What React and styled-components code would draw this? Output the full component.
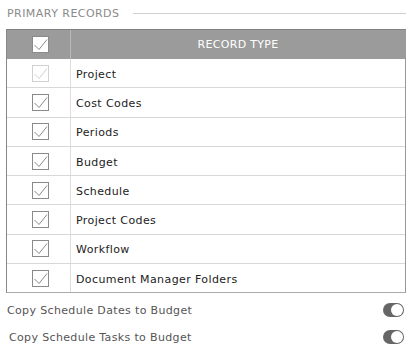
import React from "react";
import styled, { createGlobalStyle } from "styled-components";

const Global = createGlobalStyle`
  html, body { margin: 0; padding: 0; background: #fff; }
  body { font-family: "DejaVu Sans", Verdana, sans-serif; }
`;

const Page = styled.div`
  width: 413px;
  padding: 0 7px 0 6px;
  box-sizing: border-box;
`;

const SectionHead = styled.div`
  display: flex;
  align-items: center;
  height: 27px;
  padding-left: 1px;
  gap: 14px;
`;

const SectionTitle = styled.span`
  font-size: 11px;
  color: #8a8a8a;
  letter-spacing: 0.45px;
  white-space: nowrap;
`;

const Rule = styled.div`
  flex: 1;
  height: 1px;
  background: #d0d0d0;
`;

const Table = styled.div`
  margin-top: 2px;
  border: 1px solid #aaa;
  border-top-color: #808080;
  border-left-color: #888;
  border-right-color: #999;
`;

const Row = styled.div`
  display: grid;
  grid-template-columns: 64px 1fr;
  height: ${(p) => (p.$head ? "29px" : "28.3px")};
  background: ${(p) => (p.$head ? "#9b9b9b" : "#fff")};
  border-top: ${(p) => (p.$head || p.$afterHead ? "none" : "1px solid #d8d8d8")};
  box-sizing: content-box;
`;

const CheckCell = styled.div`
  display: flex;
  align-items: center;
  justify-content: center;
  padding-left: 3px;
  border-right: 1px solid ${(p) => (p.$head ? "#b8b8b8" : "#dcdcdc")};
`;

const LabelCell = styled.div`
  display: flex;
  align-items: center;
  justify-content: ${(p) => (p.$head ? "center" : "flex-start")};
  padding-left: ${(p) => (p.$head ? "0" : "5px")};
  padding-top: ${(p) => (p.$head ? "0" : "2px")};
  font-size: 11px;
  letter-spacing: ${(p) => (p.$head ? "0.3px" : "0.4px")};
  color: ${(p) => (p.$head ? "#fff" : "#222")};
`;

const Box = styled.div`
  width: 15px;
  height: 15px;
  border: 1px solid ${(p) => (p.$disabled ? "#d0d0d0" : "#8a8a8a")};
  background: #fff;
  display: flex;
  align-items: center;
  justify-content: center;
`;

const Check = ({ disabled }) => (
  <Box $disabled={disabled}>
    <svg width="15" height="15" viewBox="0 0 15 15">
      <path
        d="M1.5 8 L6 12.5 L14 2.5"
        fill="none"
        stroke={disabled ? "#d0d0d0" : "#8a8a8a"}
        strokeWidth="1"
      />
    </svg>
  </Box>
);

const Options = styled.div`
  display: flex;
  flex-direction: column;
  gap: 13px;
  margin-top: 10px;
`;

const OptionRow = styled.div`
  display: flex;
  align-items: center;
  justify-content: space-between;
  height: 14px;
  padding-left: ${(p) => p.$indent || 1}px;
  padding-right: 2px;
`;

const OptionLabel = styled.span`
  font-size: 11px;
  letter-spacing: 0.35px;
  color: #555;
`;

const Toggle = styled.div`
  width: 21px;
  height: 14px;
  border-radius: 7px;
  background: #666;
  position: relative;
  &::after {
    content: "";
    position: absolute;
    right: 1px;
    top: 1px;
    width: 12px;
    height: 12px;
    border-radius: 50%;
    background: #fff;
  }
`;

const records = [
  "Project",
  "Cost Codes",
  "Periods",
  "Budget",
  "Schedule",
  "Project Codes",
  "Workflow",
  "Document Manager Folders",
];

export default function App() {
  return (
    <Page>
      <Global />
      <SectionHead>
        <SectionTitle>PRIMARY RECORDS</SectionTitle>
        <Rule />
      </SectionHead>
      <Table>
        <Row $head>
          <CheckCell $head>
            <Check />
          </CheckCell>
          <LabelCell $head>RECORD TYPE</LabelCell>
        </Row>
        {records.map((r, i) => (
          <Row key={r} $afterHead={i === 0}>
            <CheckCell>
              <Check disabled={i === 0} />
            </CheckCell>
            <LabelCell>{r}</LabelCell>
          </Row>
        ))}
      </Table>
      <Options>
        <OptionRow>
          <OptionLabel>Copy Schedule Dates to Budget</OptionLabel>
          <Toggle />
        </OptionRow>
        <OptionRow $indent={3}>
          <OptionLabel>Copy Schedule Tasks to Budget</OptionLabel>
          <Toggle />
        </OptionRow>
      </Options>
    </Page>
  );
}
